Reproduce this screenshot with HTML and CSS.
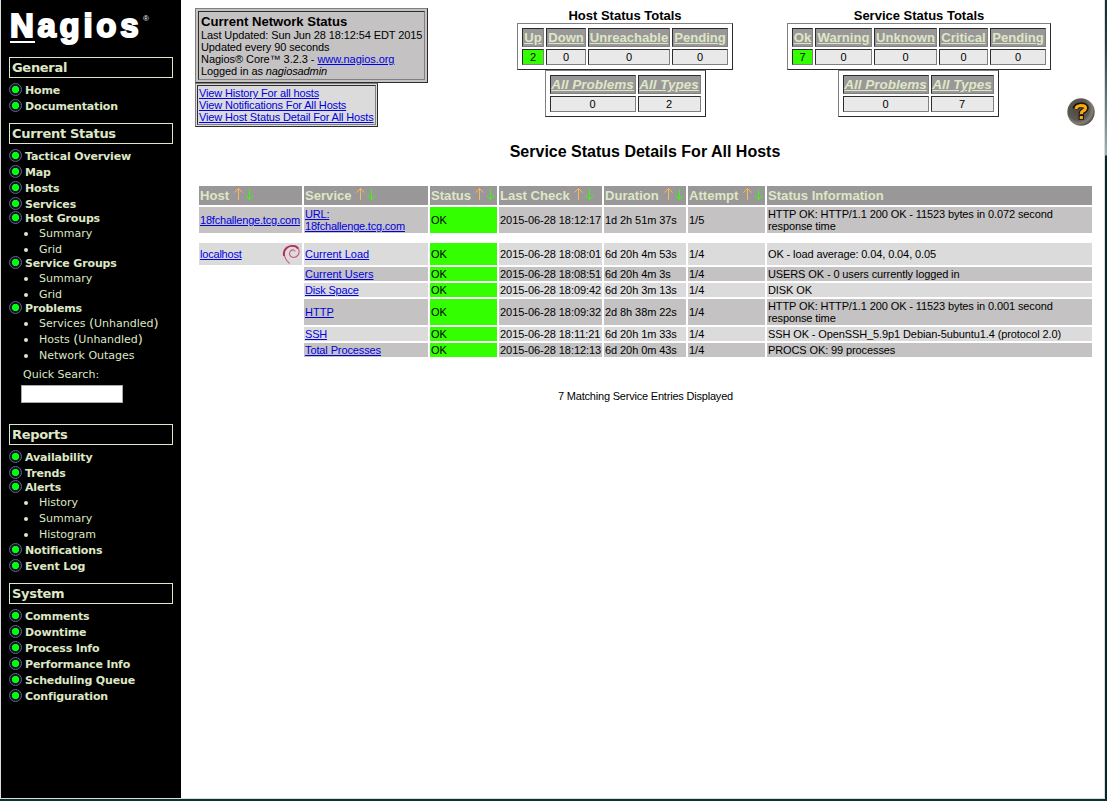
FILE: index.html
```html
<!DOCTYPE html>
<html lang="en">
<head>
<meta charset="utf-8">
<title>Nagios</title>
<link rel="stylesheet" href="styles.css">
</head>
<body>
<svg class="defs" width="0" height="0" aria-hidden="true">
  <symbol id="sort" viewBox="0 0 21 14">
    <path d="M5.500 13V1.500M1.500 5.500L5.500 1.500L9.500 5.500" fill="none" stroke="#ffb655"/>
    <path d="M16.500 2V13M12.500 8.500L16.500 12.500L20.500 8.500" fill="none" stroke="#33ff00"/>
  </symbol>
</svg>
<nav class="side">
  <div class="logo"><span>Nagios</span><sup>®</sup></div>
  <h2>General</h2>
  <ul class="menu"><li><a>Home</a></li><li><a>Documentation</a></li></ul>
  <h2>Current Status</h2>
  <ul class="menu">
    <li><a>Tactical Overview</a></li><li><a>Map</a></li><li><a>Hosts</a></li><li><a>Services</a></li>
    <li class="group"><a>Host Groups</a><ul><li>Summary</li><li>Grid</li></ul></li>
    <li class="group"><a>Service Groups</a><ul><li>Summary</li><li>Grid</li></ul></li>
    <li class="group"><a>Problems</a><ul><li>Services <b>(</b>Unhandled<b>)</b></li><li>Hosts <b>(</b>Unhandled<b>)</b></li><li>Network Outages</li></ul></li>
  </ul>
  <label class="search">Quick Search:<input type="text"></label>
  <h2>Reports</h2>
  <ul class="menu">
    <li><a>Availability</a></li><li><a>Trends</a></li>
    <li class="group"><a>Alerts</a><ul><li>History</li><li>Summary</li><li>Histogram</li></ul></li>
    <li><a>Notifications</a></li><li><a>Event Log</a></li>
  </ul>
  <h2>System</h2>
  <ul class="menu">
    <li><a>Comments</a></li><li><a>Downtime</a></li><li><a>Process Info</a></li><li><a>Performance Info</a></li><li><a>Scheduling Queue</a></li><li><a>Configuration</a></li>
  </ul>
</nav>
<main class="main">
  <header class="top">
    <div class="info">
      <div class="box status"><div class="inner">
        <h1>Current Network Status</h1>
        <p>Last Updated: Sun Jun 28 18:12:54 EDT 2015</p>
        <p>Updated every 90 seconds</p>
        <p class="version">Nagios® Core™ 3.2.3 - <a href="#">www.nagios.org</a></p>
        <p>Logged in as <i>nagiosadmin</i></p>
      </div></div>
      <div class="box views"><div class="inner">
        <p><a href="#">View History For all hosts</a></p>
        <p><a href="#">View Notifications For All Hosts</a></p>
        <p><a href="#">View Host Status Detail For All Hosts</a></p>
      </div></div>
    </div>
    <section class="totals hosts">
      <h3>Host Status Totals</h3>
      <div class="grid counts">
        <b>Up</b><b>Down</b><b>Unreachable</b><b>Pending</b>
        <span class="ok">2</span><span>0</span><span>0</span><span>0</span>
      </div>
      <div class="grid sums"><b>All Problems</b><b>All Types</b><span>0</span><span>2</span></div>
    </section>
    <section class="totals services">
      <h3>Service Status Totals</h3>
      <div class="grid counts">
        <b>Ok</b><b>Warning</b><b>Unknown</b><b>Critical</b><b>Pending</b>
        <span class="ok">7</span><span>0</span><span>0</span><span>0</span><span>0</span>
      </div>
      <div class="grid sums"><b>All Problems</b><b>All Types</b><span>0</span><span>7</span></div>
    </section>
    <svg class="help" viewBox="0 0 28 28">
      <defs><radialGradient id="ball" cx=".4" cy=".4" r=".65"><stop offset="0" stop-color="#4b4841"/><stop offset=".6" stop-color="#5b5852"/><stop offset=".8" stop-color="#827f79"/><stop offset="1" stop-color="#45423d"/></radialGradient></defs>
      <circle cx="14" cy="14" r="13.700" fill="url(#ball)"/>
      <path d="M8 11Q9 7.300 14 7.300Q19.200 7.300 18.900 10.300Q18.500 12.200 16 13.200Q14.300 14 14.300 16.500M14.300 17V21.800" fill="none" stroke="#15120a" stroke-width="5.400"/>
      <path d="M9 11Q9.500 7.700 14 7.500Q18.700 7.500 18.500 10.300Q18.300 12.100 16 13Q14.300 13.800 14.300 16M14.300 18V21" fill="none" stroke="#ffa80d" stroke-width="3.200"/>
    </svg>
  </header>
  <h2 class="title">Service Status Details For All Hosts</h2>
  <table class="list">
    <colgroup><col class="c1"><col class="c2"><col class="c3"><col class="c4"><col class="c5"><col class="c6"><col class="c7"></colgroup>
    <tr class="head"><th><div><span>Host</span><svg><use href="#sort"/></svg></div></th><th><div><span>Service</span><svg><use href="#sort"/></svg></div></th><th><div><span>Status</span><svg><use href="#sort"/></svg></div></th><th><div><span>Last Check</span><svg><use href="#sort"/></svg></div></th><th><div><span>Duration</span><svg><use href="#sort"/></svg></div></th><th><div><span>Attempt</span><svg><use href="#sort"/></svg></div></th><th>Status Information</th></tr>
    <tr class="odd two"><td><a class="name" href="#">18fchallenge.tcg.com</a></td><td><a class="name" href="#">URL:<br>18fchallenge.tcg.com</a></td><td class="ok">OK</td><td class="date">2015-06-28 18:12:17</td><td class="age">1d 2h 51m 37s</td><td>1/5</td><td class="msg">HTTP OK: HTTP/1.1 200 OK - 11523 bytes in 0.072 second<br>response time</td></tr>
    <tr class="gap"><td colspan="7"></td></tr>
    <tr class="even tall"><td><div class="host"><a class="name" href="#">localhost</a><svg viewBox="0 0 20 20"><path d="M7.500 19.500C2.500 15.500.8 9.500 4 5C7.500.8 14.500.5 16.700 5C18.300 10 15 13.500 11.500 13.500C7.500 13 6.500 9.500 8.500 7C10.500 5 13 6 13 7.500" fill="none" stroke="#d05580" stroke-width="1.100"/><path d="M2 12Q1 6.500 5 3.500Q9 .8 14 2.500L16 4.500" fill="none" stroke="#b0315c" stroke-width="1.900"/></svg></div></td><td><a href="#">Current Load</a></td><td class="ok">OK</td><td class="date">2015-06-28 18:08:01</td><td class="age">6d 20h 4m 53s</td><td>1/4</td><td class="msg">OK - load average: 0.04, 0.04, 0.05</td></tr>
    <tr class="odd"><td class="none"></td><td><a href="#">Current Users</a></td><td class="ok">OK</td><td class="date">2015-06-28 18:08:51</td><td class="age">6d 20h 4m 3s</td><td>1/4</td><td class="msg">USERS OK - 0 users currently logged in</td></tr>
    <tr class="even"><td class="none"></td><td><a class="name" href="#">Disk Space</a></td><td class="ok">OK</td><td class="date">2015-06-28 18:09:42</td><td class="age">6d 20h 3m 13s</td><td>1/4</td><td class="msg">DISK OK</td></tr>
    <tr class="odd two"><td class="none"></td><td><a href="#">HTTP</a></td><td class="ok">OK</td><td class="date">2015-06-28 18:09:32</td><td class="age">2d 8h 38m 22s</td><td>1/4</td><td class="msg">HTTP OK: HTTP/1.1 200 OK - 11523 bytes in 0.001 second<br>response time</td></tr>
    <tr class="even"><td class="none"></td><td><a class="name" href="#">SSH</a></td><td class="ok">OK</td><td class="date">2015-06-28 18:11:21</td><td class="age">6d 20h 1m 33s</td><td>1/4</td><td class="msg">SSH OK - OpenSSH_5.9p1 Debian-5ubuntu1.4 (protocol 2.0)</td></tr>
    <tr class="odd"><td class="none"></td><td><a class="msg" href="#">Total Processes</a></td><td class="ok">OK</td><td class="date">2015-06-28 18:12:13</td><td class="age">6d 20h 0m 43s</td><td>1/4</td><td class="msg">PROCS OK: 99 processes</td></tr>
  </table>
  <p class="matching">7 Matching Service Entries Displayed</p>
</main>
<div class="edge"></div>
</body>
</html>
```
FILE: styles.css
```css
* { box-sizing: border-box; }
body, h1, h2, h3, p, ul { margin: 0; padding: 0; }
body { width: 1107px; height: 801px; overflow: hidden; display: grid; grid-template: 799px 2px / 181px 924px 2px; background: #0d3035; font: 11px/12px "Liberation Sans", Arial, sans-serif; color: #000; }
.defs { position: absolute; }
a[href] { color: #0000e0; text-decoration: underline; }

/* navigation */
.side { background: #000; border-left: 1px solid #ddd; border-bottom: 1px solid #ddd; padding-left: 8px; color: #dee7c6; font-family: "DejaVu Sans", Verdana, sans-serif; }
.logo { height: 57px; padding: 8px 0 0 1px; display: flex; color: #fff; }
.logo span { height: 35px; width: 133px; white-space: nowrap; font: bold 33px/36px "Liberation Sans", Arial, sans-serif; letter-spacing: 3.700px; -webkit-text-stroke: 2px #fff; background: linear-gradient(#fff, #fff) 0 100% / 25px 2.500px no-repeat; }
.logo sup { font: 8px/12px "Liberation Sans", sans-serif; margin-top: 5px; }
.side h2 { width: 164px; height: 21px; border: 1px solid #dee7c6; padding-left: 2px; font-size: 13px; line-height: 19px; letter-spacing: -.3px; }
.menu { list-style: none; padding: 4px 0 9px; }
.menu a { display: flex; align-items: center; height: 16px; padding-top: 2px; line-height: 14px; font-weight: bold; letter-spacing: -.15px; white-space: nowrap; }
.menu a::before { content: ""; width: 11px; height: 11px; margin: -4px 3px 0 0; border: 1px solid #62628e; border-radius: 50%; background: radial-gradient(circle, #00ff0c 0 3.300px, #101022 4px); }
.menu .group { margin-top: -2px; }
.menu .group ul { list-style: none; margin-top: -1px; }
.menu .group li { display: flex; align-items: center; height: 16px; padding: 1px 0 0 15px; white-space: pre; }
.menu .group li::before { content: ""; width: 4px; height: 4px; margin-right: 11px; border-radius: 50%; background: #dee7c6; }
.menu b { font-weight: normal; font-size: 13px; }
.search { display: block; height: 58px; padding-left: 14px; line-height: 17px; margin-top: -6px; }
.search input { display: block; width: 102px; height: 18px; margin: 2px 0 0 -2px; border: 1px solid #aaa; background: #fff; }

/* summary */
.main { background: #fff; border-right: 1px solid #ddd; border-bottom: 1px solid #ddd; }
.top { display: flex; height: 143px; padding: 8px 0 0 14px; }
.info { width: 322px; }
.box { border: 1px solid; border-color: #808080 #2c2c2c #2c2c2c #808080; }
.inner { height: 100%; border: 1px solid; border-color: #2c2c2c #808080 #808080 #2c2c2c; white-space: nowrap; letter-spacing: -.1px; }
.status { width: 233px; height: 75px; padding: 2px; background: #c4c2c2; }
.status .inner { padding: 2px; }
.status h1 { font-size: 13.100px; line-height: 15px; letter-spacing: 0; }
.version { letter-spacing: -.05px; }
.views { width: 183px; height: 44px; padding: 1px; background: #dbdbdb; }
.views .inner { padding: 1px; letter-spacing: -.15px; }
.totals { display: flex; flex-direction: column; align-items: center; width: 216px; }
.totals.services { width: 264px; margin-left: 54px; }
.totals h3 { font-size: 13px; line-height: 15px; height: 15px; }
.grid { display: grid; grid-template-rows: 19px 16px; gap: 2px; height: 47px; padding: 4px; border: 1px solid; border-color: #808080 #2c2c2c #2c2c2c #808080; }
.hosts .counts { grid-template-columns: 22px 40px 82px 56px; }
.services .counts { grid-template-columns: 21px 57px 63px 49px 56px; }
.sums { grid-template-columns: 86px 63px; }
.services .sums { margin-right: 2px; }
.grid b, .grid span { border: 1px solid; border-color: #2c2c2c #808080 #808080 #2c2c2c; background: #e9e9e9; text-align: center; line-height: 14px; white-space: nowrap; }
.grid b { display: flex; justify-content: center; background: #999797; color: #dee7c6; font-size: 13.100px; line-height: 18px; text-decoration: underline; }
.sums b { font-style: italic; font-size: 13.500px; }
.grid .ok { background: #3f0; }
.help { width: 28px; height: 28px; margin: 90px 0 0 16px; }
.title { text-align: center; font-size: 16px; line-height: 18px; width: 928px; }

/* service list */
.list { table-layout: fixed; width: 897px; margin: 23px 0 0 16px; border-spacing: 2px; }
.c1 { width: 103px; } .c2 { width: 124px; } .c3 { width: 67px; } .c4 { width: 103px; } .c5 { width: 82px; } .c6 { width: 77px; } .c7 { width: 325px; }
.list th, .list td { height: 14px; padding: 0 0 0 1px; text-align: left; vertical-align: middle; white-space: nowrap; }
.list th { height: 19px; background: #999797; color: #dee7c6; font-size: 13.100px; line-height: 19px; }
.list th div { display: flex; height: 19px; }
.list th span { flex: none; width: 33px; }
.list th:nth-child(2) span { width: 50px; }
.list th:nth-child(3) span { width: 43px; }
.list th:nth-child(4) span { width: 73px; }
.list th:nth-child(5) span { width: 58px; }
.list th:nth-child(6) span { width: 53px; }
.list th svg { flex: none; width: 21px; height: 14px; margin-top: 1px; }
.list .two td { height: 26px; }
.list .tall td { height: 22px; }
.list .gap td { height: 6px; }
.odd td { background: #c4c2c2; }
.even td { background: #dbdbdb; }
.list .ok { background: #3f0; }
.list .none { background: none; }
.name { letter-spacing: -.2px; }
.date { letter-spacing: -.05px; }
.age { letter-spacing: -.08px; }
.msg { letter-spacing: -.11px; }
.host { display: flex; justify-content: space-between; align-items: center; }
.host svg { width: 20px; height: 20px; }
.matching { text-align: center; width: 929px; margin-top: 31px; letter-spacing: -.2px; }
.edge { background: linear-gradient(#0d3035, #1d3b40 40px, #a0b0b2 155px, #04282c 156px); }
```
